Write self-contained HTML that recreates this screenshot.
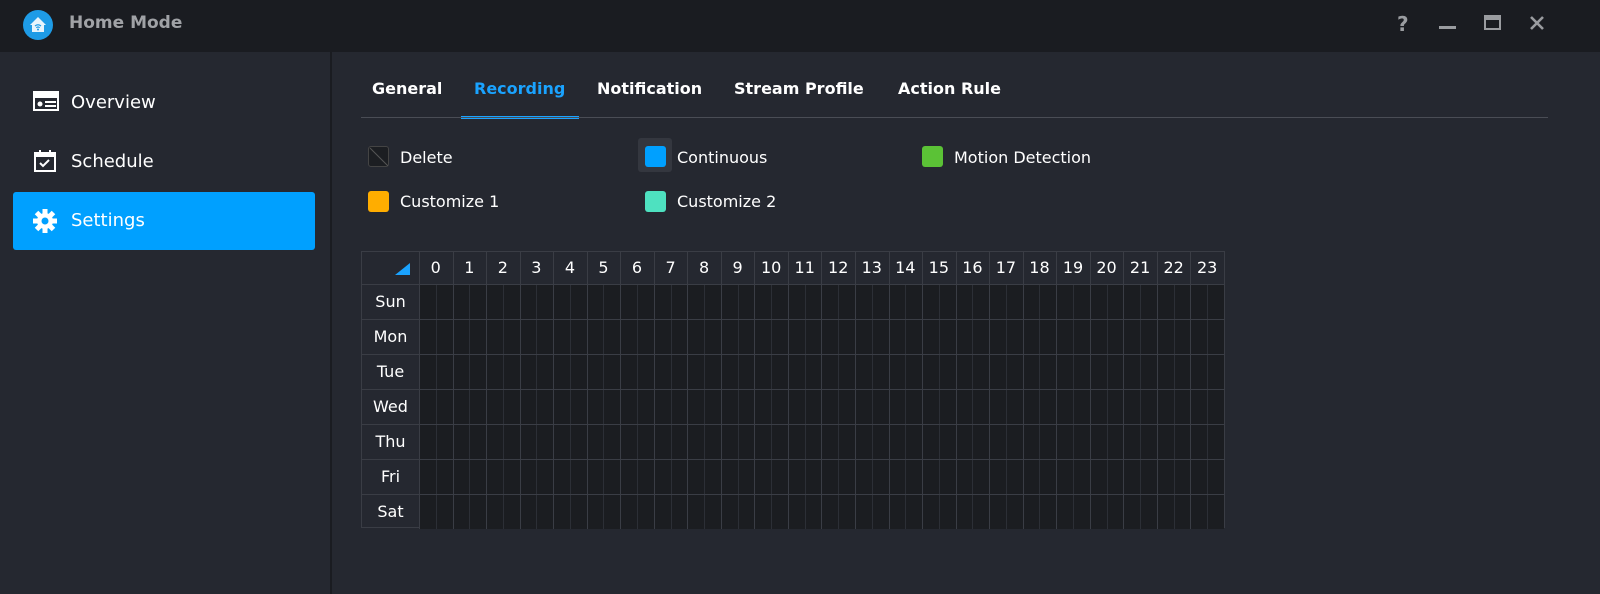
<!DOCTYPE html>
<html><head><meta charset="utf-8"><style>
*{margin:0;padding:0;box-sizing:border-box}
body{width:1600px;height:594px;background:#252830;font-family:"DejaVu Sans","Liberation Sans",sans-serif;color:#fff;position:relative;overflow:hidden}
.top{position:absolute;left:0;top:0;width:1600px;height:52px;background:#1a1c21}
.title{position:absolute;left:69px;top:13px;font-size:17px;font-weight:bold;color:#a0a2a6}
.side{position:absolute;left:0;top:52px;width:332px;height:542px;border-right:2px solid #1a1c21}
.item{position:absolute;left:13px;width:302px;height:58px;font-size:18px;line-height:58px;padding-left:58px}
.item svg{position:absolute;left:20px;top:17px}
.sel{background:#00a0ff;border-radius:3px}
.tab{position:absolute;top:79px;font-size:16px;font-weight:bold}
.line{position:absolute;left:361px;top:117px;width:1187px;height:1px;background:#4a4d55}
.leg{position:absolute;font-size:16px}
.sw{position:absolute;width:21px;height:21px;border-radius:3px}
.grid{position:absolute;left:361px;top:251px;width:864px;height:277px;border:1px solid #3a3d45;background:#252830}
.c{position:absolute;font-size:16px;text-align:center}
</style></head><body>
<div class="top">
<svg style="position:absolute;left:22px;top:9px" width="32" height="32"><circle cx="16" cy="16" r="15" fill="#1e9be6"/><path d="M8 16 L16 8 L24 16 L22 16 L22 23 L10 23 L10 16Z" fill="#e8f4fc"/><path d="M13 17 Q16 14.5 19 17 M14.3 18.7 Q16 17.3 17.7 18.7" stroke="#1e9be6" stroke-width="1.2" fill="none"/><circle cx="16" cy="20.5" r="1" fill="#1e9be6"/></svg>
<div class="title">Home Mode</div>
<div style="position:absolute;left:1397px;top:12px;font-size:20px;color:#9a9ca0;font-weight:bold">?</div>
<div style="position:absolute;left:1439px;top:26px;width:17px;height:3px;background:#9a9ca0"></div>
<div style="position:absolute;left:1484px;top:15px;width:17px;height:15px;border:2px solid #9a9ca0;border-top-width:5px"></div>
<svg style="position:absolute;left:1529px;top:15px" width="16" height="16"><path d="M2 2L14 14M14 2L2 14" stroke="#9a9ca0" stroke-width="2.6"/></svg>
</div>
<div class="side">
<div class="item" style="top:22px"><svg width="26" height="20"><rect x="1" y="1" width="24" height="18" fill="none" stroke="#fff" stroke-width="2"/><rect x="1" y="1" width="24" height="6" fill="#fff"/><circle cx="7" cy="13" r="2.5" fill="#fff"/><rect x="12" y="10" width="11" height="2" fill="#fff"/><rect x="12" y="14" width="11" height="2" fill="#fff"/></svg>Overview</div>
<div class="item" style="top:81px"><svg width="24" height="24" style="top:16px"><rect x="2" y="4" width="20" height="18" fill="none" stroke="#fff" stroke-width="2"/><rect x="2" y="4" width="20" height="4" fill="#fff"/><rect x="6" y="1" width="2" height="5" fill="#fff"/><rect x="16" y="1" width="2" height="5" fill="#fff"/><path d="M7 14l3 3 6-6" stroke="#fff" stroke-width="2" fill="none"/></svg>Schedule</div>
<div class="item sel" style="top:140px"><svg width="24" height="24"><g fill="#fff" transform="translate(12 12)"><circle r="8"/><rect x="-2.5" y="-12" width="5" height="24"/><rect x="-2.5" y="-12" width="5" height="24" transform="rotate(45)"/><rect x="-2.5" y="-12" width="5" height="24" transform="rotate(90)"/><rect x="-2.5" y="-12" width="5" height="24" transform="rotate(135)"/></g><circle cx="12" cy="12" r="3.5" fill="#00a0ff"/></svg>Settings</div>
</div>
<div class="tab" style="left:372px">General</div>
<div class="tab" style="left:474px;color:#1aa3ff">Recording</div>
<div style="position:absolute;left:461px;top:116px;width:118px;height:3px;background:#1aa3ff"></div>
<div class="tab" style="left:597px">Notification</div>
<div class="tab" style="left:734px">Stream Profile</div>
<div class="tab" style="left:898px">Action Rule</div>
<div class="line"></div>
<div class="sw" style="left:368px;top:146px;background:#1c1e22;border:1px solid #444"><svg width="19" height="19" style="position:absolute;left:0;top:0"><path d="M1 1L19 19" stroke="#555" stroke-width="1"/></svg></div>
<div class="leg" style="left:400px;top:148px">Delete</div>
<div style="position:absolute;left:638px;top:138px;width:34px;height:34px;background:#34373f;border-radius:3px"></div>
<div class="sw" style="left:645px;top:146px;background:#00a0ff"></div>
<div class="leg" style="left:677px;top:148px">Continuous</div>
<div class="sw" style="left:922px;top:146px;background:#5bc236"></div>
<div class="leg" style="left:954px;top:148px">Motion Detection</div>
<div class="sw" style="left:368px;top:191px;background:#ffad00"></div>
<div class="leg" style="left:400px;top:192px">Customize 1</div>
<div class="sw" style="left:645px;top:191px;background:#4ee1c0"></div>
<div class="leg" style="left:677px;top:192px">Customize 2</div>
<div class="grid" id="g"></div>
<script>
var g=document.getElementById('g'),h='';
var x0=57,cw=33.54,rh=35,hh=32;
h+='<svg style="position:absolute;left:33px;top:11px" width="15" height="12"><path d="M15 0V12H0Z" fill="#1aa3ff"/></svg>';
for(var i=0;i<24;i++){var x=x0+i*cw;h+='<div class="c" style="left:'+x+'px;top:'+(hh/2-10)+'px;width:'+cw+'px">'+i+'</div>';
h+='<div style="position:absolute;left:'+x+'px;top:0;width:1px;height:275px;background:#3a3d45"></div>';}
var d=['Sun','Mon','Tue','Wed','Thu','Fri','Sat'];
for(var r=0;r<7;r++){var y=hh+r*rh;h+='<div style="position:absolute;left:0;top:'+y+'px;width:862px;height:1px;background:#3a3d45"></div>';
h+='<div class="c" style="left:0;width:'+x0+'px;top:'+(y+8)+'px">'+d[r]+'</div>';
h+='<div style="position:absolute;left:'+(x0+1)+'px;top:'+(y+1)+'px;width:'+(862-x0-1)+'px;height:'+(rh-1)+'px;background:#1b1d21"></div>';}
for(var i=0;i<24;i++){var x=x0+i*cw;h+='<div style="position:absolute;left:'+x+'px;top:'+hh+'px;width:1px;height:245px;background:#3a3d45"></div>';
h+='<div style="position:absolute;left:'+(x+cw/2)+'px;top:'+hh+'px;width:1px;height:245px;background:#2c2f36"></div>';}
for(var r=0;r<7;r++){h+='<div style="position:absolute;left:0;top:'+(hh+r*rh)+'px;width:862px;height:1px;background:#3a3d45"></div>';}
g.innerHTML=h;
</script>
</body></html>
